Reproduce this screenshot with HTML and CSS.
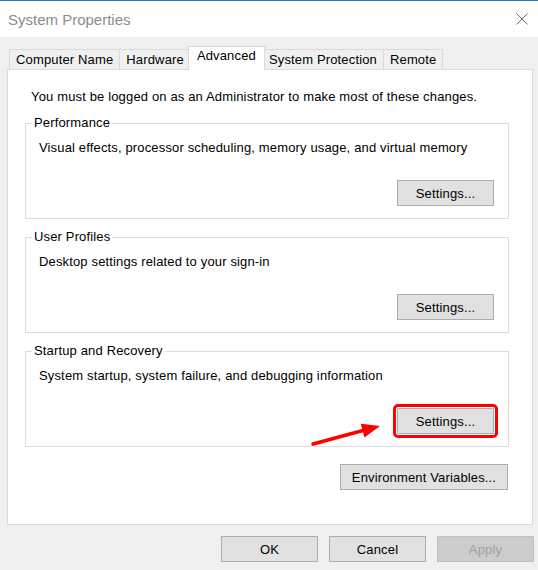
FILE: index.html
```html
<!DOCTYPE html>
<html>
<head>
  <title>System Properties</title>
  <link rel="stylesheet" href="styles.css">
</head>
<body>
  <div class="window">
    <div class="titlebar">
      <span class="title">System Properties</span>
      <svg class="close" width="12" height="12" viewBox="0 0 12 12">
        <path d="M0.5 0.5L11.5 11.5M11.5 0.5L0.5 11.5" stroke="#6a6a6a" stroke-width="1" fill="none"/>
      </svg>
    </div>

    <div class="tabs">
      <div class="tab">Computer Name</div>
      <div class="tab">Hardware</div>
      <div class="tab active">Advanced</div>
      <div class="tab">System Protection</div>
      <div class="tab">Remote</div>
    </div>

    <div class="panel">
      <p class="note">You must be logged on as an Administrator to make most of these changes.</p>

      <fieldset class="group">
        <legend>Performance</legend>
        <p>Visual effects, processor scheduling, memory usage, and virtual memory</p>
        <div class="actions"><button class="btn">Settings...</button></div>
      </fieldset>

      <fieldset class="group">
        <legend>User Profiles</legend>
        <p>Desktop settings related to your sign-in</p>
        <div class="actions"><button class="btn">Settings...</button></div>
      </fieldset>

      <fieldset class="group">
        <legend>Startup and Recovery</legend>
        <p>System startup, system failure, and debugging information</p>
        <div class="actions"><button class="btn flagged">Settings...</button></div>
      </fieldset>

      <div class="env-row">
        <button class="btn env">Environment Variables...</button>
      </div>
    </div>

    <div class="footer">
      <button class="btn">OK</button>
      <button class="btn">Cancel</button>
      <button class="btn" disabled>Apply</button>
    </div>

    <!-- annotation arrow pointing at the startup settings button -->
    <svg class="arrow" width="90" height="40" viewBox="0 0 90 40">
      <line x1="13" y1="34" x2="63" y2="20.5" stroke="#f00" stroke-width="3.5" stroke-linecap="round"/>
      <polygon points="80,16 64.4,27.4 60.8,13.8" fill="#f00"/>
    </svg>
  </div>
</body>
</html>
```

FILE: styles.css
```css
body {
  margin: 0;
  font-family: "Liberation Sans", Arial, sans-serif;
  font-size: 13px;
  letter-spacing: 0.15px;
  color: #000;
}
.window {
  position: relative;
  width: 538px;
  height: 570px;
  box-sizing: border-box;
  border-top: 1px solid #2b78b6;
  background: #f0f0f0;
  overflow: hidden;
}
.titlebar {
  height: 36px;
  background: #fff;
  display: flex;
  align-items: center;
  justify-content: space-between;
  padding: 0 10px 0 8px;
}
.title {
  font-size: 15px;
  letter-spacing: 0;
  color: #8c8c8c;
}
.close {
  display: block;
}
.tabs {
  display: flex;
  align-items: flex-end;
  height: 23px;
  margin-top: 9px;
  padding-left: 10px;
}
.tab {
  height: 20px;
  line-height: 20px;
  padding: 0 6px;
  margin-left: -1px;
  border: 1px solid #d9d9d9;
  border-bottom: none;
  box-sizing: border-box;
  white-space: nowrap;
}
.tab.active {
  position: relative;
  z-index: 1;
  height: 24px;
  line-height: 18px;
  margin: 0 -2px -1px -3px;
  padding: 0 8px;
  background: #fff;
}
.panel {
  width: 526px;
  height: 456px;
  margin-left: 7px;
  box-sizing: border-box;
  border: 1px solid #d9d9d9;
  background: #fff;
  padding: 19px 0 0 17px;
}
.note {
  margin: 0 0 0 6px;
  line-height: 16px;
}
.group {
  width: 484px;
  min-width: 0;
  margin: 9px 0 0 0;
  padding: 8px 14px 12px 13px;
  border: 1px solid #dcdcdc;
  box-sizing: border-box;
}
.group legend {
  padding: 0 2px;
  margin-left: -7px;
  line-height: 18px;
}
.group p {
  margin: 0;
  line-height: 16px;
}
.actions {
  display: flex;
  justify-content: flex-end;
  margin-top: 24px;
}
.btn {
  width: 97px;
  height: 26px;
  padding: 0;
  box-sizing: border-box;
  border: 1px solid #adadad;
  background: #e1e1e1;
  font-family: inherit;
  font-size: 13px;
  letter-spacing: 0.15px;
  color: #000;
}
.btn:disabled {
  background: #cccccc;
  border-color: #bfbfbf;
  color: #a0a0a0;
}
.btn.flagged {
  outline: 3px solid #f00;
  outline-offset: 1px;
  border-radius: 1px;
}
.env-row {
  width: 483px;
  display: flex;
  justify-content: flex-end;
  margin-top: 17px;
}
.btn.env {
  width: 168px;
}
.footer {
  display: flex;
  justify-content: flex-end;
  gap: 11px;
  margin-top: 11px;
  padding-right: 4px;
}
.arrow {
  position: absolute;
  left: 300px;
  top: 409px;
}
```
